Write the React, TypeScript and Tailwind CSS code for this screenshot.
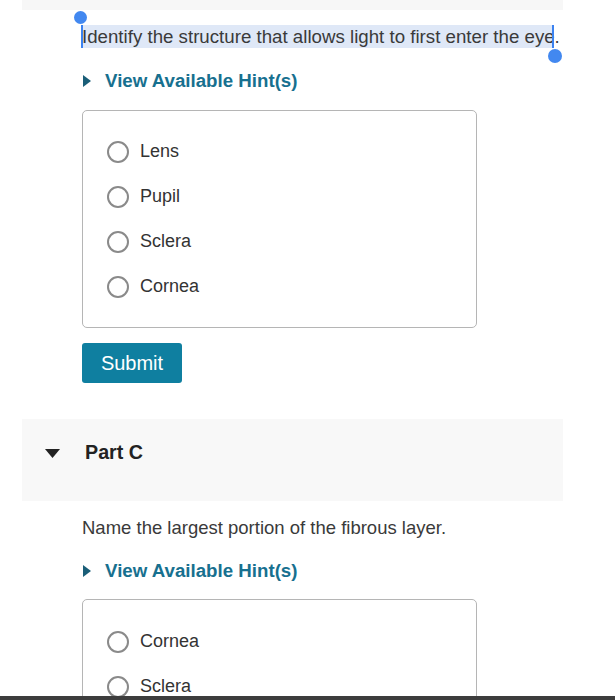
import React from "react";

const Radio = ({ label }: { label: string }) => (
  <div className="flex items-center h-[45px]">
    <span className="w-[22px] h-[22px] rounded-full border-2 border-[#8a8a8a] bg-white shrink-0" />
    <span className="ml-[11px] text-[18px] text-[#333]">{label}</span>
  </div>
);

const Hint = () => (
  <div className="flex items-center h-[26px] text-[#17708f]">
    <svg width="8" height="12" viewBox="0 0 8 12" className="ml-[1px]">
      <polygon points="0,0 8,6 0,12" fill="#1a5e78" />
    </svg>
    <span className="ml-[14px] text-[18.7px] font-bold">View Available Hint(s)</span>
  </div>
);

export default function App() {
  return (
    <div
      className="relative w-[615px] h-[700px] overflow-hidden bg-white"
      style={{ fontFamily: '"Liberation Sans", Arial, sans-serif' }}
    >
      <div className="ml-[22px] w-[541px] h-[10px] bg-[#f7f7f7]" />

      <div className="pl-[82px]">
        <div className="mt-[15px] relative">
          <span className="inline-block h-[23px] leading-[23px] bg-[#dfe8f7] text-[18.7px] text-[#3a3a3a] w-[471px] whitespace-nowrap">
            Identify the structure that allows light to first enter the eye.
          </span>
          {/* selection handles */}
          <span className="absolute left-[-1px] top-0 w-[2px] h-[23px] bg-[#3b82f0]" />
          <span className="absolute left-[-8px] top-[-14px] w-[13px] h-[13px] rounded-full bg-[#4288f0]" />
          <span className="absolute left-[470px] top-0 w-[2px] h-[23px] bg-[#3b82f0]" />
          <span className="absolute left-[466px] top-[24px] w-[14px] h-[14px] rounded-full bg-[#4288f0]" />
        </div>

        <div className="mt-[18px]">
          <Hint />
        </div>

        <div className="mt-[16px] w-[395px] h-[218px] border border-[#b5b5b5] rounded-[5px] pl-[24px] pt-[18px]">
          <Radio label="Lens" />
          <Radio label="Pupil" />
          <Radio label="Sclera" />
          <Radio label="Cornea" />
        </div>

        <button className="mt-[15px] w-[100px] h-[40px] rounded-[3px] bg-[#0f7fa0] text-white text-[20px] flex items-center justify-center">
          Submit
        </button>
      </div>

      <div className="mt-[36px] ml-[22px] w-[541px] h-[82px] bg-[#f8f8f8] flex items-center pb-[14px]">
        <svg width="15" height="9" viewBox="0 0 15 9" className="ml-[23px]">
          <polygon points="0,0 15,0 7.5,9" fill="#222" />
        </svg>
        <span className="ml-[25px] text-[19.7px] font-bold text-[#222]">Part C</span>
      </div>

      <div className="pl-[82px]">
        <div className="mt-[15px] h-[24px] leading-[24px] text-[18.5px] text-[#3a3a3a]">
          Name the largest portion of the fibrous layer.
        </div>
        <div className="mt-[18px]">
          <Hint />
        </div>
        <div className="mt-[15px] w-[395px] h-[218px] border border-[#b5b5b5] rounded-[5px] pl-[24px] pt-[19px]">
          <Radio label="Cornea" />
          <Radio label="Sclera" />
        </div>
      </div>

      <div className="absolute left-0 bottom-0 w-full h-[4px] bg-[#3d3d3d]" />
    </div>
  );
}
